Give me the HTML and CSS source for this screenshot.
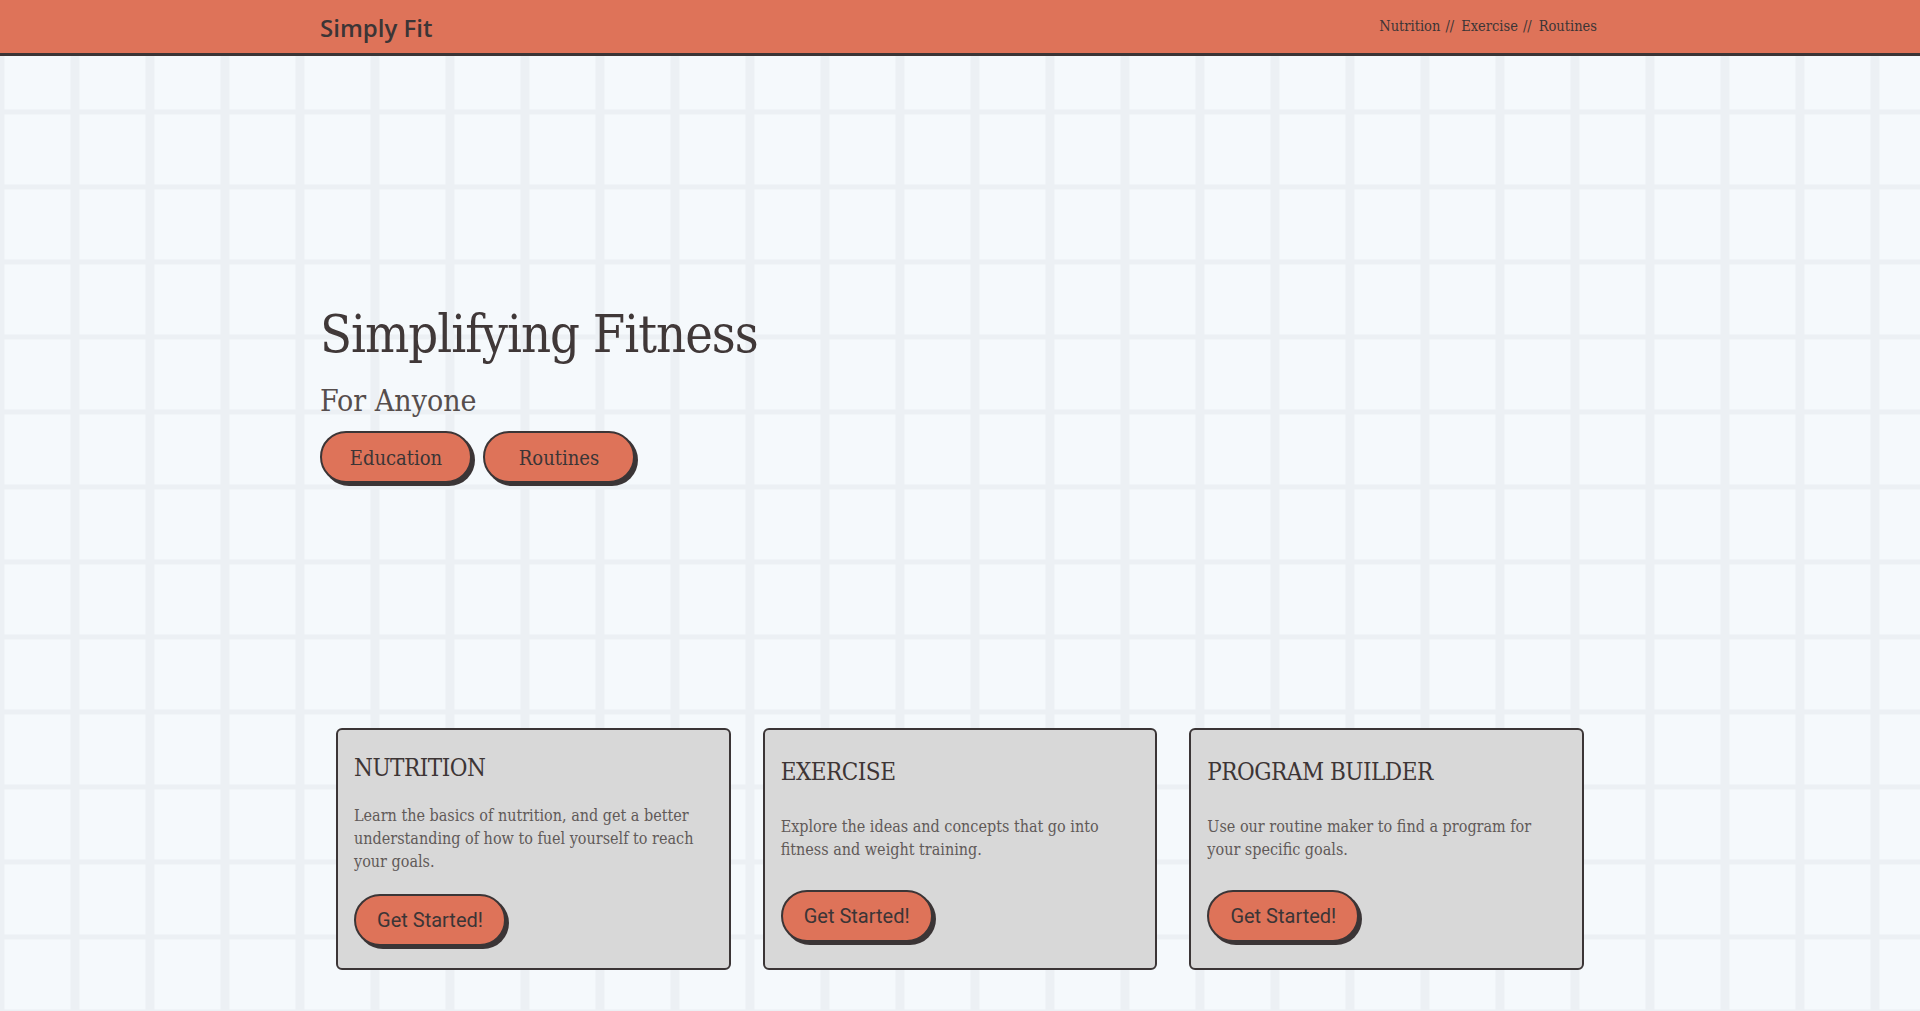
FILE: index.html
```html
<!DOCTYPE html>
<html lang="en">
<head>
<meta charset="utf-8">
<title>Simply Fit</title>
<link rel="stylesheet" href="styles.css">
</head>
<body>
<header class="site-header">
  <div class="container header-inner">
    <a class="logo" href="#">Simply Fit</a>
    <nav class="nav">
      <a href="#">Nutrition</a><span class="sep">//</span><a href="#">Exercise</a><span class="sep">//</span><a href="#">Routines</a>
    </nav>
  </div>
</header>
<main class="container">
  <section class="hero">
    <h1 class="hero-title">Simplifying Fitness</h1>
    <p class="hero-tagline">For Anyone</p>
    <div class="hero-actions">
      <a class="btn btn-hero" href="#">Education</a>
      <a class="btn btn-hero" href="#">Routines</a>
    </div>
  </section>
  <section class="cards">
    <article class="card">
      <h2 class="card-title">NUTRITION</h2>
      <p class="card-text">Learn the basics of nutrition, and get a better understanding of how to fuel yourself to reach your goals.</p>
      <div><button class="btn btn-card" type="button">Get Started!</button></div>
    </article>
    <article class="card">
      <h2 class="card-title">EXERCISE</h2>
      <p class="card-text">Explore the ideas and concepts that go into fitness and weight training.</p>
      <div><button class="btn btn-card" type="button">Get Started!</button></div>
    </article>
    <article class="card">
      <h2 class="card-title">PROGRAM BUILDER</h2>
      <p class="card-text">Use our routine maker to find a program for your specific goals.</p>
      <div><button class="btn btn-card" type="button">Get Started!</button></div>
    </article>
  </section>
</main>
</body>
</html>
```

FILE: styles.css
```css
html {
  min-height: 100%;
  background-color: #f5f9fc;
  background-image:
    linear-gradient(to right, #ecf0f4 0, #ecf0f4 4px, transparent 5px, transparent 70px, #ecf0f4 71px, #ecf0f4 75px),
    linear-gradient(to bottom, #ecf0f4 0, #ecf0f4 2px, transparent 3px, transparent 72px, #ecf0f4 73px, #ecf0f4 75px);
  background-size: 75px 75px, 75px 75px;
  background-position: 0 0, 0 37px;
}

body {
  margin: 0;
  font-family: "DejaVu Serif Condensed", "DejaVu Serif", serif;
  color: #3d3535;
}

a {
  color: inherit;
  text-decoration: none;
}

.container {
  width: 1280px;
  margin: 0 auto;
}

.site-header {
  background: #de7359;
  height: 53px;
  border-bottom: 3px solid #3b3536;
}

.header-inner {
  height: 53px;
  display: flex;
  justify-content: space-between;
  align-items: center;
}

.logo {
  font-family: "Open Sans", "Noto Sans", sans-serif;
  font-weight: 600;
  font-size: 24px;
  padding-top: 2px;
  color: #3b3536;
}

.nav {
  font-size: 14.5px;
  padding-bottom: 2px;
  padding-right: 3px;
  color: #3b3536;
}

.nav .sep {
  margin: 0 7px 0 5px;
}

.hero {
  padding-top: 245px;
}

.hero-title {
  margin: 0;
  font-size: 52px;
  line-height: 66px;
  letter-spacing: -1px;
  font-weight: normal;
  color: #403838;
}

.hero-tagline {
  margin: 16px 0 0;
  font-size: 30px;
  line-height: 36px;
  font-weight: normal;
  color: #564e4d;
}

.hero-actions {
  margin-top: 12px;
  display: flex;
  gap: 11px;
}

.btn {
  box-sizing: border-box;
  display: inline-flex;
  align-items: center;
  justify-content: center;
  width: 152px;
  height: 52px;
  background: #de7359;
  border: 2px solid #3b3536;
  border-radius: 26px;
  box-shadow: 3px 3px 0 #3b3536;
  color: #3b3536;
  cursor: pointer;
}

.btn-hero {
  font-size: 20px;
  padding-top: 2px;
}

.btn-card {
  font-family: Roboto, "Liberation Sans", sans-serif;
  font-size: 20px;
  padding: 0;
}

.cards {
  margin-top: 245px;
  padding: 0 16px;
  display: grid;
  grid-template-columns: repeat(3, 1fr);
  gap: 32px;
}

.card {
  background: #d8d8d8;
  border: 2px solid #3b3536;
  border-radius: 6px;
  padding: 23px 16px 22px;
  display: flex;
  flex-direction: column;
  justify-content: space-around;
  gap: 21px;
}

.card-title {
  margin: 0;
  font-size: 24px;
  line-height: 30px;
  letter-spacing: -0.5px;
  font-weight: normal;
}

.card-text {
  margin: 0;
  font-size: 16px;
  line-height: 23px;
  color: #615a58;
}
```
